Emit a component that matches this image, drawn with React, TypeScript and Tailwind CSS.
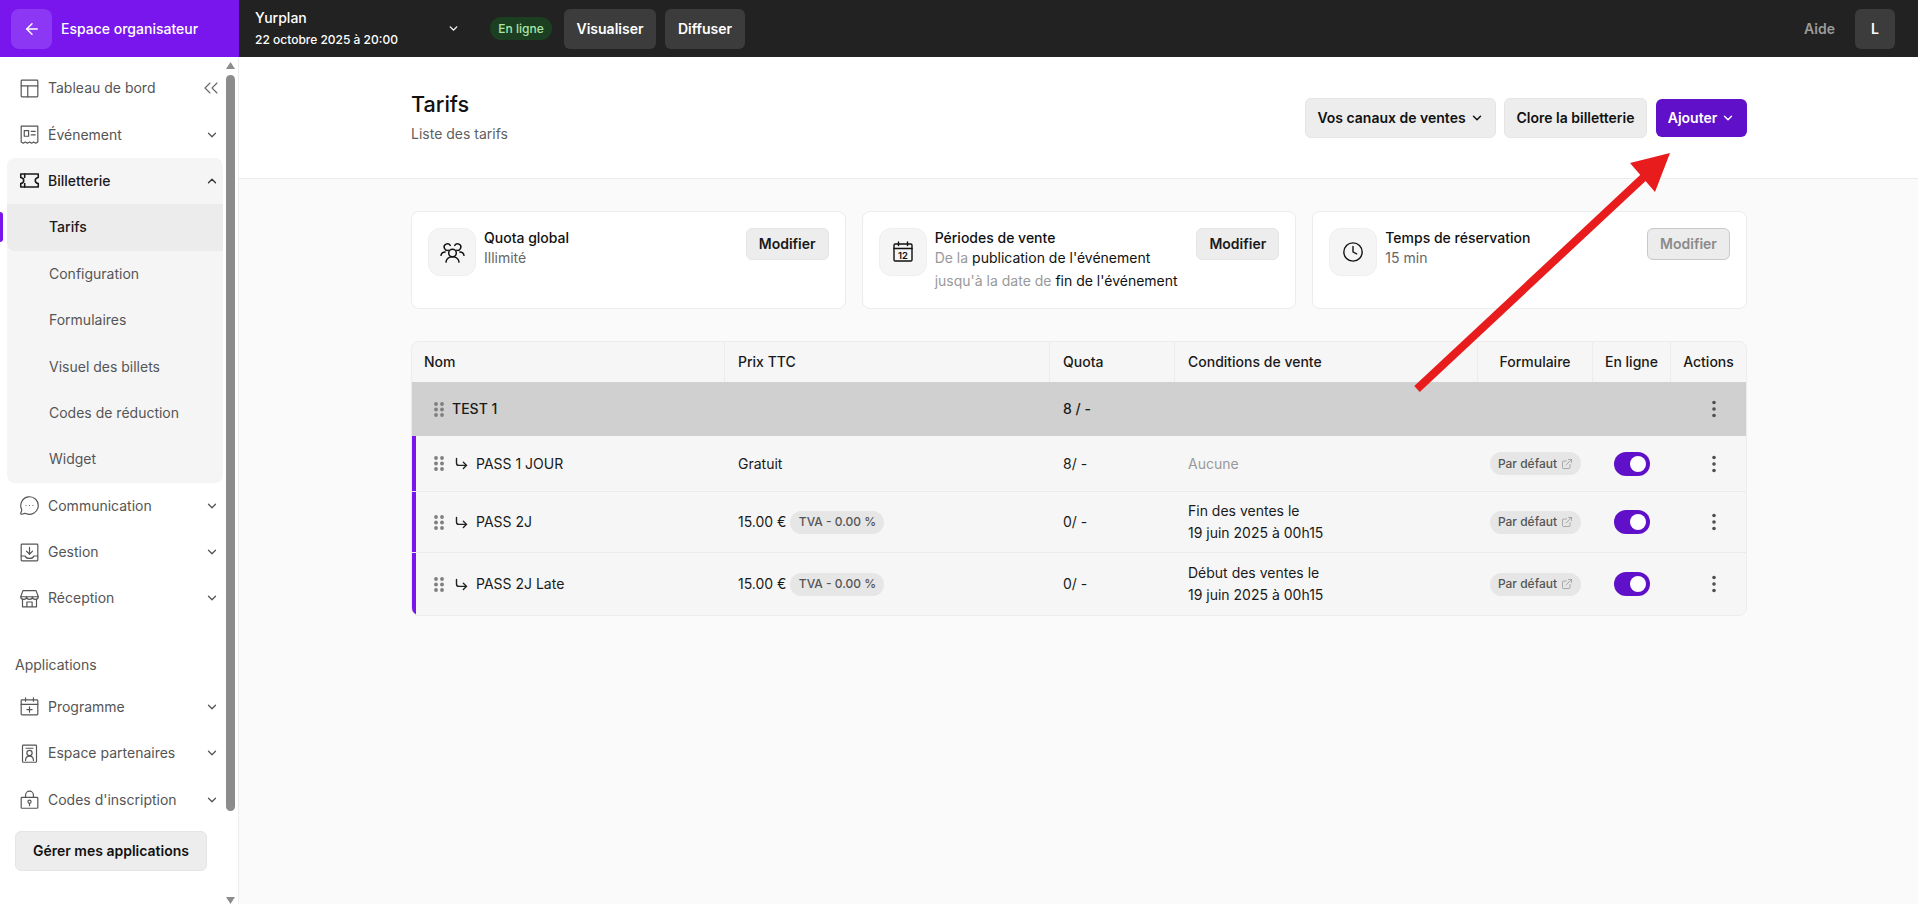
import React from "react";
import { ArrowLeft, ChevronDown, ChevronUp, ChevronsLeft, MessageCircleMore, Clock, CornerDownRight, ExternalLink } from "lucide-react";

const I = ({ children, size = 21, w = 1.35 }: { children: React.ReactNode; size?: number; w?: number }) => (
  <svg width={size} height={size} viewBox="0 0 24 24" fill="none" stroke="currentColor" strokeWidth={w} strokeLinecap="round" strokeLinejoin="round" className="shrink-0">
    {children}
  </svg>
);

const IconBoard = () => (
  <I><rect x="2.5" y="2.5" width="19" height="19" rx="1" /><path d="M2.5 9h19M10 9v12.5" /></I>
);
const IconEvent = () => (
  <I><path d="M2.5 2.5h19v18l-2.4 1.5-2.3-1.5-2.4 1.5-2.4-1.5-2.4 1.5-2.3-1.5-2.4 1.5-2.4-1.5z" /><rect x="6" y="7.5" width="5" height="6.5" /><path d="M14 8.5h4.5M14 12.5h4.5" /></I>
);
const IconTicket = () => (
  <I w={1.8}><path d="M2 4.500h20v4c-2 .3-3.400 1.800-3.400 3.500s1.400 3.200 3.400 3.500v4H2v-4c2-.3 3.400-1.800 3.400-3.500S4 8.800 2 8.500z" /><path d="M6.500 4.500v4M6.500 15.500v4" /></I>
);
const IconInbox = () => (
  <I><rect x="2.500" y="2.500" width="19" height="19" rx="1" /><path d="M12 6v8M8.500 10.500L12 14l3.500-3.500" /><path d="M2.500 16H7c.5 1.800 2.500 2.800 5 2.800s4.500-1 5-2.800h4.500" /></I>
);
const IconStore = () => (
  <I><path d="M4.500 3h15L22 10H2z" /><path d="M2 10c0 2 1.600 3 3.300 3S8.700 12 8.700 10c0 2 1.600 3 3.300 3s3.300-1 3.300-3c0 2 1.700 3 3.400 3S22 12 22 10" /><path d="M4 13v8.500h16V13M9 21.500V16h6v5.500" /></I>
);
const IconCalPlus = () => (
  <I><rect x="2.500" y="4.500" width="19" height="17" rx="1" /><path d="M2.500 9.500h19M7.500 2v4M16.500 2v4M12 12.500v6M9 15.500h6" /></I>
);
const IconPartner = () => (
  <I><rect x="4" y="2.500" width="16" height="19.500" rx="1" /><path d="M8 6h8" /><circle cx="12" cy="11.500" r="3" /><path d="M7.500 20c0-3 2-5 4.500-5s4.500 2 4.500 5" /></I>
);
const IconLock = () => (
  <I><rect x="2.500" y="9.500" width="19" height="12.500" rx="1" /><path d="M7.500 9.500V7a4.500 4.500 0 0 1 9 0v2.500" /><circle cx="12" cy="14.500" r="1.800" /><path d="M12 16.300V19" /></I>
);
const IconPeople = () => (
  <I size={27} w={1.3}>
    <circle cx="12" cy="12.500" r="3.400" />
    <path d="M6.200 20.500c.4-2.800 2.800-4.600 5.800-4.600s5.400 1.800 5.800 4.600" />
    <path d="M8.400 9.900A2.900 2.900 0 1 1 10 5.700" />
    <path d="M15.600 9.900A2.900 2.900 0 1 0 14 5.700" />
    <path d="M1.800 14.500c.3-1.800 1.700-3 3.700-3M22.200 14.500c-.3-1.800-1.700-3-3.700-3" />
  </I>
);

const Dots = () => (
  <svg width="10" height="15" viewBox="0 0 10 15" fill="#7f7f7f" className="shrink-0">
    {[2, 7.5, 13].map((y) => (
      <React.Fragment key={y}>
        <circle cx="2" cy={y} r="1.900" />
        <circle cx="8" cy={y} r="1.900" />
      </React.Fragment>
    ))}
  </svg>
);

const Kebab = () => (
  <svg width="6" height="18" viewBox="0 0 6 18" fill="#4f4f4f">
    <circle cx="3" cy="2.500" r="1.800" />
    <circle cx="3" cy="9" r="1.800" />
    <circle cx="3" cy="15.500" r="1.800" />
  </svg>
);

const Tri = ({ up }: { up?: boolean }) => (
  <svg width="9" height="7" viewBox="0 0 9 7" fill="#8c8c8c">
    <path d={up ? "M4.500 0L9 7H0z" : "M0 0h9L4.500 7z"} />
  </svg>
);

const Item = ({ icon, label, chevron = true, strong, extra }: { icon: React.ReactNode; label: string; chevron?: boolean; strong?: boolean; extra?: React.ReactNode }) => (
  <div className={`flex h-[46.4px] items-center gap-[8px] pl-[12px] pr-[4px] text-sm ${strong ? "font-medium text-[#1a1a1a]" : "text-[#555555]"}`}>
    {icon}
    <span className="flex-1 whitespace-nowrap">{label}</span>
    {chevron && (strong ? <ChevronUp size={14} strokeWidth={2.25} className="text-[#333]" /> : <ChevronDown size={14} strokeWidth={2.25} className="text-[#555]" />)}
    {extra}
  </div>
);

const Sub = ({ label, active }: { label: string; active?: boolean }) => (
  <div className={`relative flex h-[46.4px] items-center rounded-bl-lg pl-[42px] text-sm ${active ? "bg-[#ececec] font-medium text-[#1a1a1a]" : "text-[#555555]"}`}>
    {active && <span className="absolute left-[-7px] top-[8px] h-[30px] w-[3px] rounded-r bg-[#7916ee]" />}
    {label}
  </div>
);

const Modifier = ({ disabled }: { disabled?: boolean }) => (
  <button className={`h-8 w-[83px] shrink-0 rounded-md border text-sm font-semibold ${disabled ? "border-[#c9c9c9] bg-[#ececec] text-[#8a8a8a]" : "border-[#e5e5e5] bg-[#ededed] text-[#1a1a1a]"}`}>
    Modifier
  </button>
);

const Card = ({ icon, title, children, disabled }: { icon: React.ReactNode; title: string; children: React.ReactNode; disabled?: boolean }) => (
  <div className="flex h-[98px] items-start gap-2 rounded-lg border border-[#ececec] bg-white px-4 pt-4">
    <div className="flex h-12 w-12 shrink-0 items-center justify-center rounded-xl border border-[#efefef] bg-[#f5f5f5] text-[#111]">{icon}</div>
    <div className="flex-1 text-sm leading-5">
      <div className="font-medium text-[#111]">{title}</div>
      {children}
    </div>
    <Modifier disabled={disabled} />
  </div>
);

const cols = "grid grid-cols-[313px_325px_125px_303px_115px_78px_75px]";

const Head = ({ label, center, last }: { label: string; center?: boolean; last?: boolean }) => (
  <div className={`flex items-center ${center ? "justify-center" : "pl-[12px]"} ${last ? "" : "border-r border-[#ececec]"}`}>{label}</div>
);

const Toggle = () => (
  <div className="flex h-6 w-9 items-center justify-end rounded-full bg-[#5f10c8] pr-1">
    <span className="h-4 w-4 rounded-full bg-white" />
  </div>
);

const Badge = ({ children, wide }: { children: React.ReactNode; wide?: boolean }) => (
  <span className={`inline-flex h-[23px] items-center justify-center gap-1 whitespace-nowrap rounded-full bg-[#e6e6e6] text-xs font-medium text-[#555] ${wide ? "w-[91px]" : "w-[94px]"}`}>
    {children}
  </span>
);

const Row = ({ name, price, quota, cond, height }: { name: string; price: React.ReactNode; quota: string; cond: React.ReactNode; height: string }) => (
  <div className={`${cols} ${height} border-b border-[#ebebeb] bg-[#f6f6f6] text-sm text-[#1a1a1a] shadow-[inset_4px_0_0_#7916ee] last:border-b-0`}>
    <div className="flex items-center pl-[22px]">
      <Dots />
      <CornerDownRight size={15} strokeWidth={2.25} className="ml-[10px] text-[#222]" />
      <span className="ml-[7px]">{name}</span>
    </div>
    <div className="flex items-center gap-[4px] pl-[13px]">{price}</div>
    <div className="flex items-center pl-[13px]">{quota}</div>
    <div className="flex flex-col justify-center pl-[13px] leading-[22px]">{cond}</div>
    <div className="flex items-center justify-center">
      <Badge wide>
        Par défaut
        <ExternalLink size={12} strokeWidth={1.1} className="text-[#777]" />
      </Badge>
    </div>
    <div className="flex items-center justify-center"><Toggle /></div>
    <div className="flex items-center justify-center pl-[10px]"><Kebab /></div>
  </div>
);

export default function App() {
  return (
    <div className="relative flex h-[904px] w-full flex-col overflow-hidden bg-white font-[Inter,sans-serif]">
      <header className="flex h-[57px] shrink-0 bg-[#222222]">
        <div className="flex w-[239px] shrink-0 items-center gap-[9px] bg-[#7916ee] pl-[11px]">
          <div className="flex h-10 w-[41px] items-center justify-center rounded-lg bg-[#8b37f3] text-white">
            <ArrowLeft size={18} strokeWidth={2} />
          </div>
          <span className="whitespace-nowrap text-sm font-medium text-white">Espace organisateur</span>
        </div>
        <div className="flex flex-1 items-center pl-[16px] pr-[23px]">
          <div className="flex w-[205px] items-center justify-between text-white">
            <div>
              <div className="text-sm font-medium leading-[20px]">Yurplan</div>
              <div className="mt-[2px] whitespace-nowrap text-[12px] font-medium leading-[20px]">22 octobre 2025 à 20:00</div>
            </div>
            <ChevronDown size={13} strokeWidth={2.5} />
          </div>
          <span className="ml-[30px] flex h-[23px] w-[62px] items-center justify-center rounded-full bg-[#1c3f22] text-xs font-medium text-[#a8e6a8]">En ligne</span>
          <button className="ml-[12px] h-10 w-[92px] rounded-md bg-[#3c3c3c] text-sm font-semibold text-white">Visualiser</button>
          <button className="ml-[9px] h-10 w-[80px] rounded-md bg-[#3c3c3c] text-sm font-semibold text-white">Diffuser</button>
          <span className="ml-auto text-sm font-semibold text-[#9a9a9a]">Aide</span>
          <div className="ml-[20px] flex h-10 w-10 items-center justify-center rounded-md bg-[#3c3c3c] text-sm font-semibold text-white">L</div>
        </div>
      </header>

      <div className="flex min-h-0 flex-1">
        <aside className="flex w-[239px] shrink-0 border-r border-[#ececec] bg-white">
          <nav className="w-[226px] shrink-0 pl-[7px] pr-[3px] pt-[8px]">
            <Item icon={<IconBoard />} label="Tableau de bord" chevron={false} extra={<ChevronsLeft size={24} strokeWidth={1.1} className="mr-[-4px] text-[#666]" />} />
            <Item icon={<IconEvent />} label="Événement" />
            <div className="rounded-lg bg-[#f5f5f5]">
              <Item icon={<IconTicket />} label="Billetterie" strong />
              <Sub label="Tarifs" active />
              <Sub label="Configuration" />
              <Sub label="Formulaires" />
              <Sub label="Visuel des billets" />
              <Sub label="Codes de réduction" />
              <Sub label="Widget" />
            </div>
            <Item icon={<MessageCircleMore size={21} strokeWidth={1.35} className="shrink-0" />} label="Communication" />
            <Item icon={<IconInbox />} label="Gestion" />
            <Item icon={<IconStore />} label="Réception" />
            <div className="h-[62px] pl-[8px] pt-[33px] text-sm leading-5 text-[#555555]">Applications</div>
            <Item icon={<IconCalPlus />} label="Programme" />
            <Item icon={<IconPartner />} label="Espace partenaires" />
            <Item icon={<IconLock />} label="Codes d'inscription" />
            <button className="ml-[8px] mt-[8px] h-10 w-[192px] rounded-md border border-[#e5e5e5] bg-[#ededed] text-sm font-semibold text-[#111]">
              Gérer mes applications
            </button>
          </nav>
          <div className="flex w-[9px] shrink-0 flex-col pt-[5px]">
            <Tri up />
            <div className="mt-[6px] h-[736px] rounded-full bg-[#8c8c8c]" />
            <div className="mt-auto leading-[0]"><Tri /></div>
          </div>
        </aside>

        <main className="min-w-0 flex-1 bg-[#fafafa]">
          <div className="h-[122px] border-b border-[#ececec] bg-white">
            <div className="ml-[172px] flex w-[1336px] items-start justify-between">
              <div className="pt-[33px]">
                <h1 className="text-[21.6px] font-medium leading-7 text-[#111]">Tarifs</h1>
                <p className="mt-[6px] text-sm leading-5 text-[#5f5f5f]">Liste des tarifs</p>
              </div>
              <div className="flex items-center gap-2 pt-[41px]">
                <button className="flex h-10 w-[191px] items-center justify-center gap-1 rounded-md border border-[#e5e5e5] bg-[#ededed] text-sm font-semibold text-[#111]">
                  Vos canaux de ventes
                  <ChevronDown size={14} strokeWidth={2.5} />
                </button>
                <button className="h-10 w-[143px] rounded-md border border-[#e5e5e5] bg-[#ededed] text-sm font-semibold text-[#111]">Clore la billetterie</button>
                <button className="ml-px flex h-[38px] w-[91px] items-center justify-center gap-1 rounded-md bg-[#5f10c8] text-sm font-semibold text-white">
                  Ajouter
                  <ChevronDown size={14} strokeWidth={2.5} />
                </button>
              </div>
            </div>
          </div>

          <div className="ml-[172px] w-[1336px] pt-[32px]">
            <div className="grid grid-cols-3 gap-4">
              <Card icon={<IconPeople />} title="Quota global">
                <div className="text-[#666]">Illimité</div>
              </Card>
              <Card
                icon={
                  <svg width="22" height="24" viewBox="0 0 22 24" fill="none" stroke="currentColor" strokeWidth="1.4" strokeLinecap="round" className="shrink-0">
                    <rect x="2" y="4" width="18" height="17" rx="1.200" />
                    <path d="M2 8.500h18M6.500 2v3.500M15.500 2v3.500" />
                    <text x="11" y="18.800" textAnchor="middle" fontSize="9.500" fontWeight="600" fill="currentColor" stroke="none">12</text>
                  </svg>
                }
                title="Périodes de vente"
              >
                <div className="whitespace-nowrap text-[#111]"><span className="text-[#999]">De la</span> publication de l'événement</div>
                <div className="mt-[3px] whitespace-nowrap text-[#111]"><span className="text-[#999]">jusqu'à la date de</span> fin de l'événement</div>
              </Card>
              <Card icon={<Clock size={22} strokeWidth={1.5} />} title="Temps de réservation" disabled>
                <div className="text-[#666]">15 min</div>
              </Card>
            </div>

            <div className="mt-[32px] overflow-hidden rounded-lg border border-[#ececec] bg-[#f6f6f6]">
              <div className={`${cols} h-[40px] text-sm font-medium text-[#1a1a1a]`}>
                <Head label="Nom" />
                <div className="flex items-center border-r border-[#ececec] pl-[13px]">Prix TTC</div>
                <div className="flex items-center border-r border-[#ececec] pl-[13px]">Quota</div>
                <div className="flex items-center border-r border-[#ececec] pl-[13px]">Conditions de vente</div>
                <Head label="Formulaire" center />
                <Head label="En ligne" center />
                <Head label="Actions" center last />
              </div>
              <div className={`${cols} h-[54px] bg-[#cfd0cf] text-sm font-medium text-[#1a1a1a]`}>
                <div className="flex items-center gap-[8px] pl-[22px]"><Dots /><span>TEST 1</span></div>
                <div />
                <div className="flex items-center pl-[13px]">8 / -</div>
                <div />
                <div />
                <div />
                <div className="flex items-center justify-center pl-[10px]"><Kebab /></div>
              </div>
              <Row name="PASS 1 JOUR" price="Gratuit" quota="8/ -" height="h-[56px]" cond={<span className="text-[#999]">Aucune</span>} />
              <Row
                name="PASS 2J"
                height="h-[61px]"
                price={<><span>15.00 €</span><Badge>TVA - 0.00 %</Badge></>}
                quota="0/ -"
                cond={<><span>Fin des ventes le</span><span>19 juin 2025 à 00h15</span></>}
              />
              <Row
                name="PASS 2J Late"
                height="h-[62px]"
                price={<><span>15.00 €</span><Badge>TVA - 0.00 %</Badge></>}
                quota="0/ -"
                cond={<><span>Début des ventes le</span><span>19 juin 2025 à 00h15</span></>}
              />
            </div>
          </div>
        </main>
      </div>

      <svg className="pointer-events-none absolute left-0 top-0" width="1918" height="904" viewBox="0 0 1918 904">
        <line x1="1417" y1="389" x2="1645" y2="176" stroke="#e81c1c" strokeWidth="8" />
        <polygon points="1670,153 1630,163 1655,192" fill="#e81c1c" />
      </svg>
    </div>
  );
}
